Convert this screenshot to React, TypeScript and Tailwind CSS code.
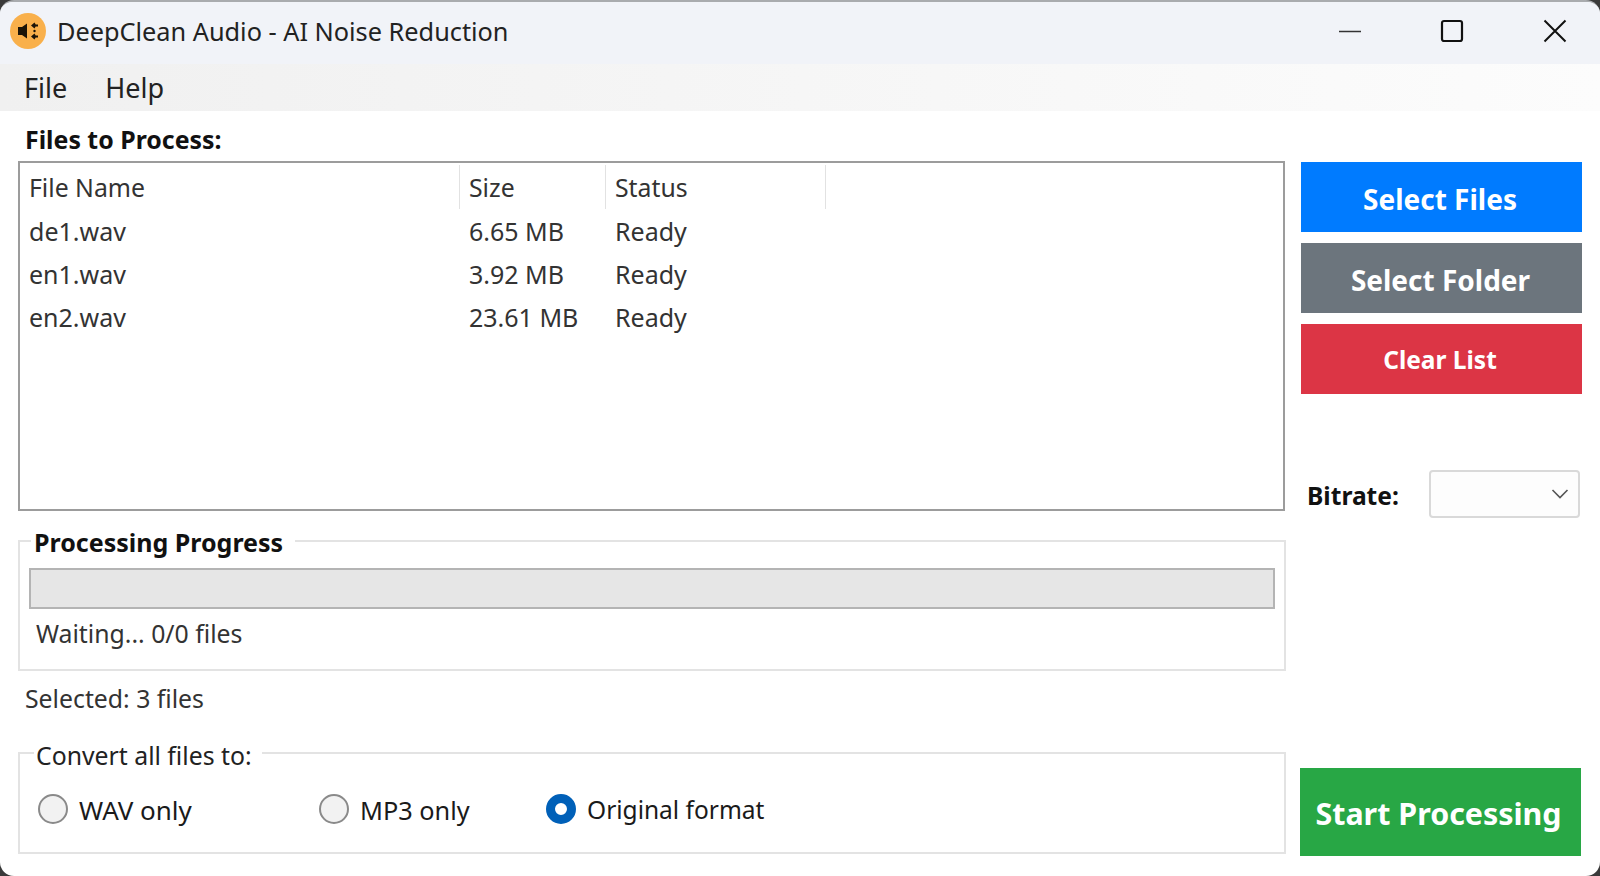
import { useState } from 'react'

const files = [
  { name: 'de1.wav', size: '6.65 MB', status: 'Ready' },
  { name: 'en1.wav', size: '3.92 MB', status: 'Ready' },
  { name: 'en2.wav', size: '23.61 MB', status: 'Ready' },
]

function Logo() {
  return (
    <svg width="36" height="36" viewBox="0 0 36 36" className="shrink-0">
      <circle cx="18" cy="18" r="18" fill="#f9b04b" />
      <path d="M8 14h4l5-3.5v15L12 22H8z" fill="#1b1408" />
      <path d="M21 12.5l3.5-3 1.2 2h2.3v2h-2.3l-1.2 2zM21 23.5l3.5-3 1.2 2h2.3v2h-2.3l-1.2 2z" fill="#1b1408" />
      <circle cx="24.5" cy="18" r="1.2" fill="#1b1408" />
    </svg>
  )
}

function Radio({ label, checked, className, textClass }: { label: string; checked?: boolean; className: string; textClass: string }) {
  return (
    <label className={`flex items-center ${className}`}>
      {checked ? (
        <span className="w-[30px] h-[30px] rounded-full border-[9px] border-[#0060b8] bg-white shrink-0" />
      ) : (
        <span className="w-[30px] h-[30px] rounded-full border-2 border-[#8a8a8a] bg-[#f2f2f2] shrink-0" />
      )}
      <span className={`ml-[11px] pt-[3px] text-[#1a1a1a] ${textClass}`}>{label}</span>
    </label>
  )
}

export default function App() {
  const [format] = useState('original')

  return (
    <div className="w-[1600px] h-[876px] bg-[#3a3a3a] overflow-hidden font-['Noto_Sans','Open_Sans',sans-serif] text-[24.8px] leading-none text-[#1a1a1a]">
      <div className="h-full bg-white rounded-[14px] border-t-2 border-[#a9abae] flex flex-col">
        {/* Title bar */}
        <div className="h-[62px] bg-[#f1f3f8] rounded-t-[12px] flex items-center pl-[10px] pb-[4px] shrink-0">
          <Logo />
          <span className="ml-[11px] pt-[2px] text-[25.3px] text-[#222]">DeepClean Audio - AI Noise Reduction</span>
          <div className="ml-auto flex items-center">
            <svg width="24" height="24" viewBox="0 0 24 24" className="mr-[78px]">
              <path d="M1 12.5h22" stroke="#333" strokeWidth="1.5" />
            </svg>
            <svg width="24" height="24" viewBox="0 0 24 24" className="mr-[79px]">
              <rect x="2" y="2" width="20" height="20" rx="2" fill="none" stroke="#111" strokeWidth="2.2" />
            </svg>
            <svg width="24" height="24" viewBox="0 0 24 24" className="mr-[33px]">
              <path d="M1.5 1.5l21 21M22.5 1.5l-21 21" stroke="#111" strokeWidth="2" />
            </svg>
          </div>
        </div>

        {/* Menu */}
        <div className="h-[47px] shrink-0 flex items-center pl-[24px] gap-[38px] bg-gradient-to-r from-[#f0f0f0] to-[#fcfcfc] text-[27px] text-[#222]">
          <span>File</span>
          <span>Help</span>
        </div>

        {/* Body */}
        <div className="flex-1 flex pl-[18px] pr-[18px]">
          <div className="w-[1268px] shrink-0 flex flex-col">
            <div className="h-[50px] pl-[7px] pt-[6px] flex items-center font-bold text-[24.9px] text-[#111]">Files to Process:</div>

            <div className="h-[350px] w-[1267px] border-2 border-[#9c9c9c] pt-[2px] shrink-0">
              <div className="flex h-[44px] items-center text-[#333] mb-[1px]">
                <div className="w-[440px] h-full pl-[9px] flex items-center border-r border-[#e2e2e2]">File Name</div>
                <div className="w-[146px] h-full pl-[9px] flex items-center border-r border-[#e2e2e2]">Size</div>
                <div className="w-[220px] h-full pl-[9px] flex items-center border-r border-[#e2e2e2]">Status</div>
              </div>
              {files.map((f) => (
                <div key={f.name} className="flex h-[43px] items-center text-[#333] text-[25px]">
                  <div className="w-[440px] pl-[9px]">{f.name}</div>
                  <div className="w-[146px] pl-[9px]">{f.size}</div>
                  <div className="pl-[9px]">{f.status}</div>
                </div>
              ))}
            </div>

            <fieldset className="mt-[15px] h-[145px] border-2 border-[#e3e3e3] px-[9px] shrink-0">
              <legend className="ml-[2px] pl-[3px] pr-[12px] pt-[4px] font-bold text-[25px] text-[#111]">Processing Progress</legend>
              <div className="h-[41px] mt-[13px] bg-[#e6e6e6] border-2 border-[#b4b4b4]" />
              <div className="mt-[12px] pl-[7px] text-[#333]">Waiting... 0/0 files</div>
            </fieldset>

            <div className="h-[54px] pl-[7px] flex items-center text-[#333] shrink-0">Selected: 3 files</div>

            <fieldset className="mt-[14px] h-[115px] border-2 border-[#e3e3e3] shrink-0">
              <legend className="ml-[14px] pl-[2px] pr-[10px] pt-[4px] text-[#222]">Convert all files to:</legend>
              <div className="flex items-center pl-[18px] mt-[26px]">
                <Radio label="WAV only" className="w-[281px]" textClass="text-[26px]" />
                <Radio label="MP3 only" className="w-[227px]" textClass="text-[25.3px]" />
                <Radio label="Original format" checked={format === 'original'} className="" textClass="text-[24.5px]" />
              </div>
            </fieldset>
          </div>

          {/* Right column */}
          <div className="flex-1 flex flex-col pl-[15px] pt-[51px] pb-[20px] text-white font-bold">
            <button className="h-[70px] w-[281px] pt-1 pr-[3px] bg-[#007bff] text-[28px]">Select Files</button>
            <button className="h-[70px] w-[281px] mt-[11px] pt-1 pr-[2px] bg-[#6c757d] text-[28px]">Select Folder</button>
            <button className="h-[70px] w-[281px] mt-[11px] pt-[2px] pr-[3px] bg-[#dc3545] text-[24.5px]">Clear List</button>
            <div className="mt-[76px] flex items-center pl-[6px] text-[#111]">
              <span className="pt-1 text-[24.6px]">Bitrate:</span>
              <div className="ml-auto mr-[2px] w-[151px] h-[48px] border-2 border-[#d9d9d9] rounded-[4px] bg-[#fdfdfd] flex items-center justify-end pr-[9px]">
                <svg width="18" height="10" viewBox="0 0 18 10">
                  <path d="M1.5 1l7.5 7.5L16.5 1" fill="none" stroke="#555" strokeWidth="1.6" />
                </svg>
              </div>
            </div>
            <button className="mt-auto h-[88px] w-[281px] -ml-[1px] pt-1 pr-[4px] bg-[#28a745] text-[30.4px]">Start Processing</button>
          </div>
        </div>
      </div>
    </div>
  )
}
